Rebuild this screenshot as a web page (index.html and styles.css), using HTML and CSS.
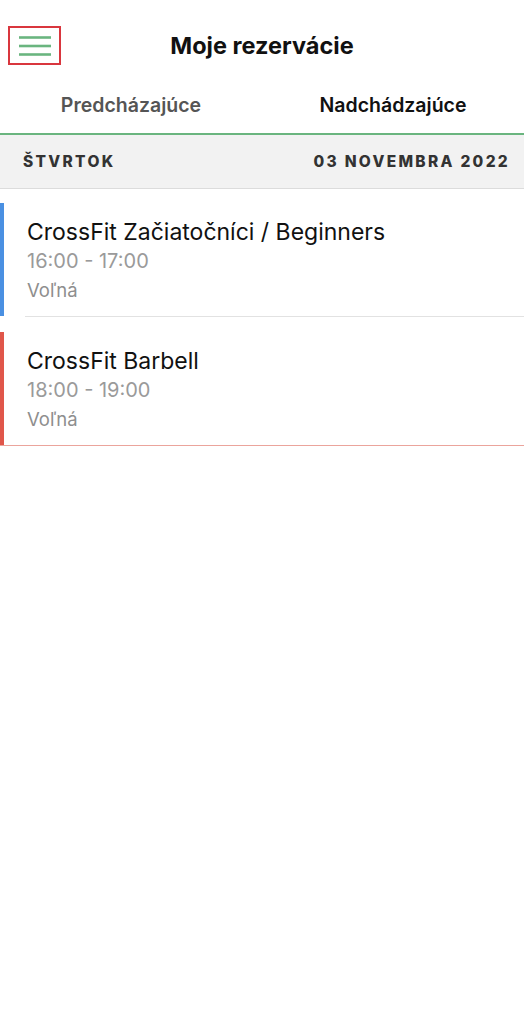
FILE: index.html
```html
<!DOCTYPE html>
<html lang="sk">
<head>
    <meta charset="UTF-8">
    <meta name="viewport" content="width=device-width, initial-scale=1.0">
    <title>Moje rezervácie</title>
    <link rel="stylesheet" href="styles.css">
</head>
<body>

    <!-- Top bar -->
    <header class="topbar">
        <button class="menu-btn" aria-label="Menu">
            <svg width="32" height="20" viewBox="0 0 32 20">
                <line x1="0" y1="1.5" x2="32" y2="1.5"/>
                <line x1="0" y1="10" x2="32" y2="10"/>
                <line x1="0" y1="18.5" x2="32" y2="18.5"/>
            </svg>
        </button>
        <h1 class="title">Moje rezervácie</h1>
    </header>

    <!-- Tabs -->
    <nav class="tabs">
        <div class="tab">Predcházajúce</div>
        <div class="tab tab-active">Nadchádzajúce</div>
    </nav>

    <!-- Day header -->
    <div class="day-header">
        <span>Štvrtok</span>
        <span>03 novembra 2022</span>
    </div>

    <!-- Reservations -->
    <div class="list">
        <div class="booking booking-blue">
            <div class="booking-name">CrossFit Začiatočníci / Beginners</div>
            <div class="booking-time">16:00 - 17:00</div>
            <div class="booking-state">Voľná</div>
        </div>
        <div class="divider"></div>

        <div class="booking booking-red">
            <div class="booking-name">CrossFit Barbell</div>
            <div class="booking-time">18:00 - 19:00</div>
            <div class="booking-state">Voľná</div>
        </div>
        <div class="divider divider-red"></div>
    </div>

</body>
</html>
```

FILE: styles.css
```css
/* Base */
body {
    margin: 0;
    font-family: Inter, "Noto Sans", Arial, sans-serif;
    background: #fff;
    color: #111;
}

/* Top bar */
.topbar {
    position: relative;
    height: 86px;
    display: flex;
    align-items: center;
    justify-content: center;
}

.menu-btn {
    position: absolute;
    left: 8px;
    top: 26px;
    width: 53px;
    height: 39px;
    padding: 0;
    border: 2px solid #d9363e;
    background: none;
    display: flex;
    align-items: center;
    justify-content: center;
}

.menu-btn svg line {
    stroke: #6ab57f;
    stroke-width: 2.6;
}

.title {
    margin: 0;
    margin-top: 4px;
    font-size: 23.5px;
    font-weight: 700;
}

/* Tabs */
.tabs {
    display: flex;
    height: 47px;
    border-bottom: 2px solid #6ab57f;
}

.tab {
    flex: 1;
    text-align: center;
    padding-top: 7px;
    font-size: 19.5px;
    font-weight: 600;
    color: #555;
}

.tab-active {
    color: #111;
}

/* Day header */
.day-header {
    display: flex;
    justify-content: space-between;
    align-items: center;
    height: 53px;
    padding: 0 14px 0 23px;
    background: #f2f2f2;
    border-bottom: 1px solid #dcdcdc;
    font-size: 15.5px;
    font-weight: 800;
    letter-spacing: 2.3px;
    text-transform: uppercase;
    color: #333;
}

/* Reservation list */
.list {
    padding-top: 14px;
}

.booking {
    padding: 15px 0 11px 23px;
    border-left: 4px solid #4a90e2;
    line-height: 29px;
}

.booking-red {
    margin-top: 15px;
    border-left-color: #e0564a;
}

.booking-name {
    font-size: 23px;
    color: #111;
}

.booking-time {
    font-size: 20px;
    color: #9a9a9a;
}

.booking-state {
    font-size: 18.5px;
    color: #8e8e8e;
}

.divider {
    height: 1px;
    margin-left: 25px;
    background: #e2e2e2;
}

.divider-red {
    margin-left: 0;
    background: #eba49c;
}
```
